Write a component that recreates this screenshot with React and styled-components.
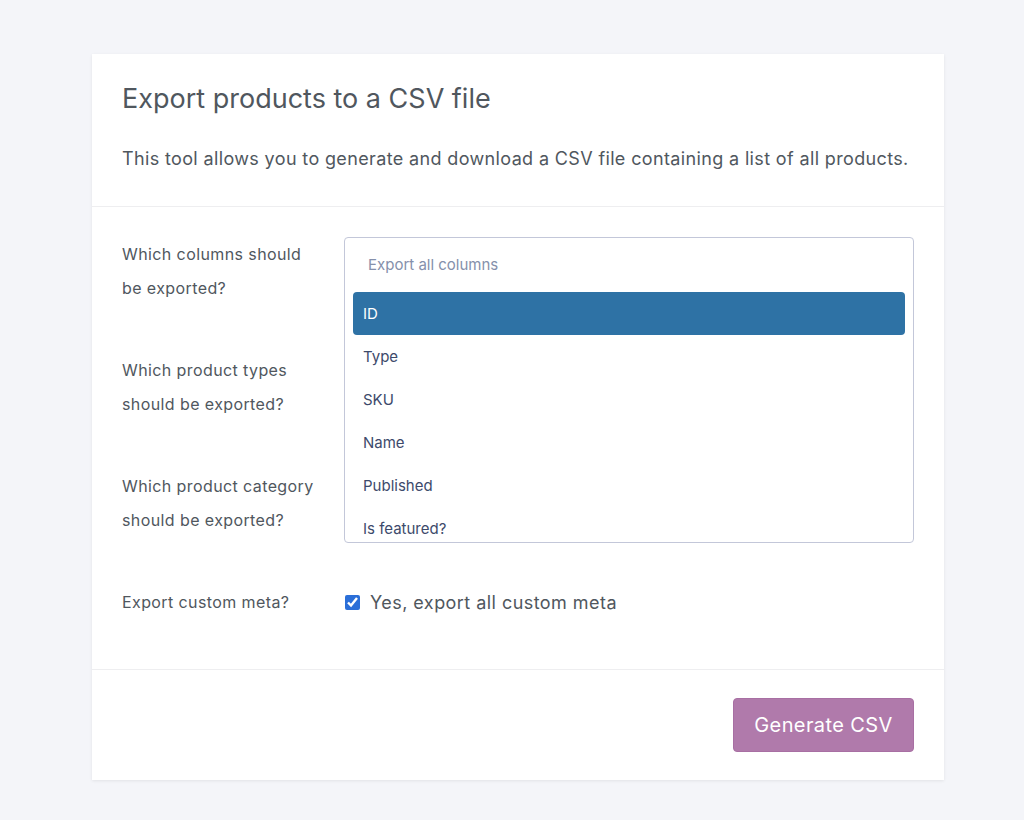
import React from 'react';
import styled, { createGlobalStyle } from 'styled-components';

const GlobalStyle = createGlobalStyle`
  body {
    margin: 0;
    background: #f4f5f9;
    font-family: Inter, "Noto Sans", sans-serif;
    color: #50575e;
  }
`;

const Page = styled.div`
  padding: 54px 80px 40px 92px;
  min-height: 820px;
  box-sizing: border-box;
`;

const Card = styled.div`
  width: 852px;
  background: #fff;
  box-shadow: 0 1px 3px rgba(0, 0, 0, 0.08);
`;

const Header = styled.div`
  padding: 28px 30px 35px;
  border-bottom: 1px solid #eeeef0;
  h2 {
    margin: 0;
    font-size: 27px;
    font-weight: 400;
    line-height: 34px;
  }
  p {
    margin: 31px 0 0;
    font-size: 18px;
    line-height: 24px;
    letter-spacing: 0.36px;
    white-space: nowrap;
  }
`;

const Form = styled.div`
  padding: 30px 30px 50px;
  display: grid;
  grid-template-columns: 222px 1fr;
  row-gap: 48px;
  border-bottom: 1px solid #eeeef0;
`;

const Label = styled.div`
  font-size: 16px;
  line-height: 34px;
  width: 200px;
  letter-spacing: 0.4px;
`;

const Field = styled.div`
  position: relative;
`;

const Dropdown = styled.div`
  position: absolute;
  top: 0;
  left: 0;
  right: 0;
  height: 306px;
  box-sizing: border-box;
  border: 1px solid #c3c7d9;
  border-radius: 4px;
  background: #fff;
  overflow: hidden;
  z-index: 2;
`;

const Placeholder = styled.div`
  padding: 0 23px;
  height: 54px;
  line-height: 54px;
  font-size: 15px;
  color: #8590ab;
`;

const Option = styled.div`
  margin: 0 8px;
  padding: 0 10px;
  height: 43px;
  line-height: 43px;
  font-size: 15px;
  border-radius: 4px;
  color: ${p => (p.$active ? '#fff' : '#3d4a6b')};
  background: ${p => (p.$active ? '#2e72a5' : 'transparent')};
`;

const CheckRow = styled.label`
  display: flex;
  align-items: center;
  gap: 10px;
  height: 34px;
  font-size: 18px;
  letter-spacing: 0.45px;
  color: #50575e;
  input {
    margin: 0 0 0 1px;
    width: 15px;
    height: 15px;
    accent-color: #2b6fd8;
  }
`;

const Footer = styled.div`
  display: flex;
  justify-content: flex-end;
  padding: 28px 30px 28px;
`;

const Button = styled.button`
  width: 181px;
  height: 54px;
  border: 1px solid #a86fa3;
  border-radius: 4px;
  background: #b07aab;
  color: #fff;
  font-family: inherit;
  font-size: 20px;
  letter-spacing: 0.4px;
  cursor: pointer;
`;

const columns = ['ID', 'Type', 'SKU', 'Name', 'Published', 'Is featured?'];

export default function App() {
  return (
    <>
      <GlobalStyle />
      <Page>
        <Card>
          <Header>
            <h2>Export products to a CSV file</h2>
            <p>This tool allows you to generate and download a CSV file containing a list of all products.</p>
          </Header>
          <Form>
            <Label>Which columns should be exported?</Label>
            <Field>
              <Dropdown>
                <Placeholder>Export all columns</Placeholder>
                {columns.map((c, i) => (
                  <Option key={c} $active={i === 0}>{c}</Option>
                ))}
              </Dropdown>
            </Field>
            <Label>Which product types should be exported?</Label>
            <Field />
            <Label>Which product category should be exported?</Label>
            <Field />
            <Label>Export custom meta?</Label>
            <Field>
              <CheckRow>
                <input type="checkbox" defaultChecked />
                Yes, export all custom meta
              </CheckRow>
            </Field>
          </Form>
          <Footer>
            <Button>Generate CSV</Button>
          </Footer>
        </Card>
      </Page>
    </>
  );
}
